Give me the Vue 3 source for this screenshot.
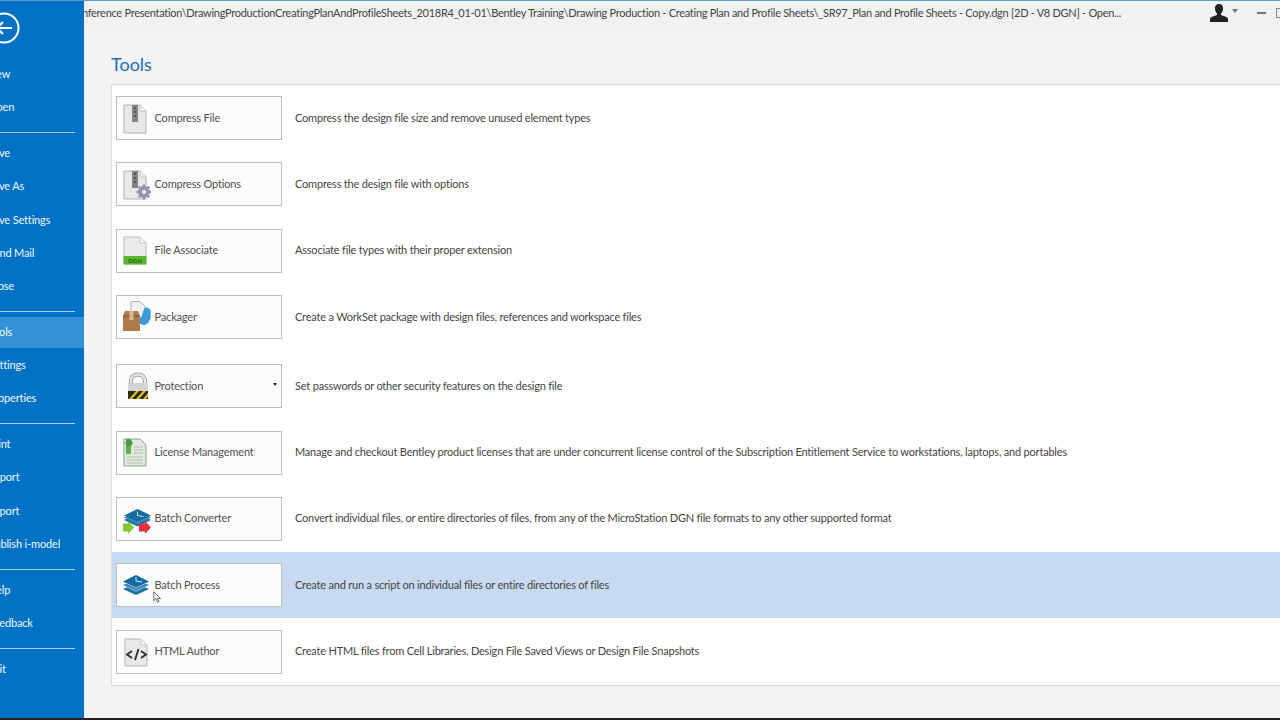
<script setup>
const navGroups = [
  ['New', 'Open'],
  ['Save', 'Save As', 'Save Settings', 'Send Mail', 'Close'],
  ['Tools', 'Settings', 'Properties'],
  ['Print', 'Import', 'Export', 'Publish i-model'],
  ['Help', 'Feedback'],
  ['Exit']
]

const tools = [
  { name: 'Compress File', icon: 'zip', desc: 'Compress the design file size and remove unused element types' },
  { name: 'Compress Options', icon: 'zipgear', desc: 'Compress the design file with options' },
  { name: 'File Associate', icon: 'dgn', desc: 'Associate file types with their proper extension' },
  { name: 'Packager', icon: 'package', desc: 'Create a WorkSet package with design files, references and workspace files' },
  { name: 'Protection', icon: 'lock', desc: 'Set passwords or other security features on the design file', menu: true },
  { name: 'License Management', icon: 'license', desc: 'Manage and checkout Bentley product licenses that are under concurrent license control of the Subscription Entitlement Service to workstations, laptops, and portables' },
  { name: 'Batch Converter', icon: 'convert', desc: 'Convert individual files, or entire directories of files, from any of the MicroStation DGN file formats to any other supported format' },
  { name: 'Batch Process', icon: 'layers', desc: 'Create and run a script on individual files or entire directories of files', active: true },
  { name: 'HTML Author', icon: 'html', desc: 'Create HTML files from Cell Libraries, Design File Saved Views or Design File Snapshots' }
]
</script>

<template>
  <div class="window">
    <aside class="sidebar">
      <svg class="back" width="40" height="40" viewBox="0 0 40 40" fill="none" stroke="#fff" stroke-width="2">
        <circle cx="4" cy="20" r="14.500" />
        <path d="M-3 20H12M3 14l-6 6 6 6" />
      </svg>
      <nav class="nav">
        <div v-for="(group, i) in navGroups" :key="i" class="nav-group">
          <a
            v-for="item in group"
            :key="item"
            class="nav-item"
            :class="{ selected: item === 'Tools' }"
          >{{ item }}</a>
        </div>
      </nav>
    </aside>

    <main class="content">
      <header class="titlebar">
        <span class="path">Conference Presentation\DrawingProductionCreatingPlanAndProfileSheets_2018R4_01-01\Bentley Training\Drawing Production - Creating Plan and Profile Sheets\_SR97_Plan and Profile Sheets - Copy.dgn [2D - V8 DGN] - Open...</span>
        <svg class="user" width="20" height="18" viewBox="0 0 20 18" fill="#222">
          <path d="M10 0c3 0 4.300 2.200 4 5-.2 2-1 3.600-2 4.600v1.400c2.500 1.200 6 1.600 7 3.400V18H1v-3.600c1-1.800 4.500-2.200 7-3.400V9.600C7 8.600 6.200 7 6 5c-.3-2.800 1-5 4-5z" />
        </svg>
        <span class="user-caret"></span>
        <span class="minimize"></span>
        <span class="maximize"></span>
      </header>

      <h1 class="heading">Tools</h1>

      <section class="panel">
        <div
          v-for="tool in tools"
          :key="tool.name"
          class="row"
          :class="{ active: tool.active }"
        >
          <button type="button" class="tool-btn">
            <svg class="icon" width="32" height="32" viewBox="0 0 32 32">
              <template v-if="tool.icon === 'zip' || tool.icon === 'zipgear'">
                <path d="M5 3h16l6 6v22H5z" fill="#e8e8e8" stroke="#b4b4b4" />
                <path d="M21 3v6h6z" fill="#fafafa" stroke="#c4c4c4" />
                <path d="M13 3h6v17h-6z" fill="#848484" />
                <path d="M15 5h2v2h-2zM15 9h2v2h-2zM15 13h2v2h-2z" fill="#555" />
              </template>
              <g v-if="tool.icon === 'zipgear'">
                <circle cx="25" cy="24" r="6" fill="#8e9aa8" />
                <path d="M25 16.500v15M17.500 24h15M19.700 18.700l10.600 10.600M30.300 18.700L19.700 29.300" stroke="#8e9aa8" stroke-width="2.500" />
                <circle cx="25" cy="24" r="2" fill="#eef0f2" />
              </g>
              <template v-if="tool.icon === 'dgn'">
                <path d="M5 2h16l6 6v21H5z" fill="#eaeaea" stroke="#bcbcbc" />
                <path d="M21 2v6h6z" fill="#fafafa" stroke="#c8c8c8" />
                <rect x="4.500" y="21" width="23" height="8.500" fill="#5cb531" />
                <text x="16" y="28" class="dgn-text">DGN</text>
              </template>
              <template v-if="tool.icon === 'package'">
                <path d="M12 .5h9l5 5V19H12z" fill="#eef1f5" stroke="#a7afb8" />
                <path d="M27 6.500c2.500 0 4.800 2 4.800 4.500 0 1.500-.5 2.500 0 4 .4 2-2.500 9-6.800 9-3 0-5.500-2-5-5 .3-1.800 2-2.500 3-4.500.9-2 1.500-8 4-8z" fill="#3d9ad9" />
                <path d="M4 15l2-5h13l2 5v15H4z" fill="#ad7a4c" />
                <path d="M4 15h17" stroke="#7f5531" />
                <path d="M10.500 10h4v9h-4z" fill="#dab78d" />
              </template>
              <template v-if="tool.icon === 'lock'">
                <path d="M12 15V10.500a7 6 0 0 1 14 0V15" fill="none" stroke="#8f8f8f" stroke-width="4" />
                <path d="M12 15V10.500a7 6 0 0 1 14 0V15" fill="none" stroke="#e8e8e8" stroke-width="2.400" />
                <rect x="9" y="13" width="20" height="16" fill="#d4d4d4" />
                <rect x="9" y="21" width="20" height="8" fill="#2b2a18" />
                <path d="M10 29l7-8h3l-7 8zM17 29l7-8h3l-7 8zM24 29l5-6v3.500L27 29z" fill="#d8c22d" />
              </template>
              <template v-if="tool.icon === 'license'">
                <path d="M5 2h16l6 6v21H5z" fill="#e2eadd" stroke="#8fa387" />
                <path d="M7 2h5v15H7z" fill="#62ad58" />
                <circle cx="10" cy="6" r="3.500" fill="#4a9c40" />
                <path d="M15 10h9M15 13h9M15 16h9M8 20h16M8 23h16M8 26h16" stroke="#afbfa8" />
              </template>
              <template v-if="tool.icon === 'convert'">
                <path d="M5 17l13.500 6.500L32 17l-4-2-9.500 4.500L9 15z" fill="#1f6f9f" />
                <path d="M5 14.500l13.500 6.500L32 14.500l-4-2-9.500 4.500L9 12.500z" fill="#3a8fc0" />
                <path d="M5 12.500L18.500 6 32 12.500 18.500 19z" fill="#156a9e" />
                <path d="M18.500 8.500v4l6 1" fill="none" stroke="#d3e6f2" />
                <path d="M4 20.500h5v-2.500l6 6.500-6 6.500v-2.500H4z" fill="#86c634" />
                <path d="M20 20.500h6v-2.500l6 6.500-6 6.500v-2.500h-6z" fill="#e0323f" />
              </template>
              <template v-if="tool.icon === 'layers'">
                <path d="M4 20l13-6 13 6-13 6z" fill="#1f6f9f" />
                <path d="M4 16.500l13-6 13 6-13 6z" fill="#d8e6f2" />
                <path d="M4 16l13-6 13 6-13 6z" fill="#3a8fc0" />
                <path d="M4 13l13-6 13 6-13 6z" fill="#d8e6f2" />
                <path d="M4 12.500l13-6.500 13 6.500-13 6z" fill="#156a9e" />
                <path d="M17 8v4l6 1" fill="none" stroke="#d3e6f2" />
              </template>
              <template v-if="tool.icon === 'html'">
                <path d="M6 3h16l6 6v21H6z" fill="#e8e8e8" stroke="#b5b5b5" />
                <path d="M22 3v6h6z" fill="#fafafa" stroke="#c4c4c4" />
                <path d="M13 15l-5 3.500 5 3.500M22 15l5 3.500-5 3.500M19.500 13l-3.500 11" fill="none" stroke="#2a2a2a" stroke-width="1.800" />
              </template>
            </svg>
            <span class="tool-name">{{ tool.name }}</span>
            <span v-if="tool.menu" class="caret"></span>
          </button>
          <span class="tool-desc">{{ tool.desc }}</span>
        </div>
      </section>
    </main>

    <svg class="cursor" width="9" height="12" viewBox="0 0 12 16">
      <path d="M1 1v12l3-3 2 5 2-1-2-4h4z" fill="#fff" stroke="#444" />
    </svg>
    <div class="bottom-edge"></div>
  </div>
</template>

<style scoped>
.window {
  position: relative;
  display: flex;
  width: 1280px;
  height: 720px;
  overflow: hidden;
  background: #f3f3f3;
  font-family: Lato, Roboto, sans-serif;
  border-top: 1px solid #5aa0c0;
  box-sizing: border-box;
}

.sidebar {
  flex: 0 0 84px;
  width: 84px;
  background: #0072c6;
  overflow: hidden;
  color: #fff;
}

.back {
  display: block;
  margin-top: 7px;
}

.nav {
  margin-top: 10px;
}

.nav-group {
  padding-bottom: 7.800px;
  margin-bottom: 4px;
  margin-right: 9px;
  border-bottom: 1px solid #a8d0ee;
}

.nav-group:last-child {
  border-bottom: none;
}

.nav-item {
  display: block;
  height: 33.200px;
  line-height: 29.200px;
  margin-right: -9px;
  margin-left: -12px;
  border: 1px solid transparent;
  border-width: 1px 0;
  background-clip: padding-box;
  box-sizing: border-box;
  font-size: 11px;
  letter-spacing: -0.15px;
  white-space: nowrap;
  color: #f2f8fc;
}

.nav-item.selected {
  background-color: #3392d8;
}

.content {
  flex: 1;
  min-width: 0;
  display: flex;
  flex-direction: column;
}

.titlebar {
  display: flex;
  align-items: center;
  flex: 0 0 24px;
  background: #f1f1f1;
  overflow: hidden;
}

.path {
  flex: 1;
  min-width: 0;
  margin-left: -15px;
  padding-bottom: 2px;
  white-space: nowrap;
  font-size: 11px;
  letter-spacing: -0.28px;
  color: #444;
}

.user {
  flex: none;
}

.user-caret {
  flex: none;
  margin: 0 19px 4px 3px;
  border: 3px solid transparent;
  border-top: 4px solid #777;
  border-bottom: none;
}

.minimize {
  flex: none;
  width: 9px;
  height: 2px;
  margin-right: 10px;
  background: #777;
}

.maximize {
  flex: none;
  width: 3px;
  height: 8px;
  border: 1px solid #888;
  border-right: none;
}

.heading {
  margin: 27px 0 8px 27px;
  font-size: 18px;
  line-height: 24px;
  font-weight: 400;
  color: #1a6fb0;
}

.panel {
  margin-left: 27px;
  border: 1px solid #dcdcdc;
  border-right: none;
  background: #fff;
  box-sizing: border-box;
}

.row {
  display: flex;
  align-items: center;
  height: 66.300px;
  padding-left: 4px;
}

.row:nth-child(5) {
  margin-top: 3px;
}

.row.active {
  background: #c6daf1;
}

.tool-btn {
  position: relative;
  display: flex;
  align-items: center;
  width: 166px;
  height: 44px;
  padding: 0 0 0 2px;
  border: 1px solid #bdbdbd;
  background: #fcfcfc;
  font: inherit;
  text-align: left;
  box-sizing: border-box;
}

.icon {
  flex: 0 0 32px;
}

.tool-name {
  margin-left: 3.500px;
  padding-bottom: 2px;
  font-size: 11px;
  letter-spacing: -0.17px;
  color: #505050;
  white-space: nowrap;
}

.caret {
  position: absolute;
  right: 4px;
  top: 18px;
  border: 2.500px solid transparent;
  border-top: 3px solid #222;
  border-bottom: none;
}

.tool-desc {
  margin-left: 13px;
  padding-bottom: 2px;
  font-size: 11px;
  letter-spacing: -0.2px;
  color: #444;
  white-space: nowrap;
}

.dgn-text {
  font-size: 6px;
  font-weight: 700;
  fill: #1f5a10;
  text-anchor: middle;
}

.cursor {
  position: absolute;
  left: 153px;
  top: 590px;
}

.bottom-edge {
  position: absolute;
  left: 0;
  right: 0;
  bottom: 0;
  height: 2px;
  background: #222;
}
</style>

<style>
body {
  margin: 0;
}
</style>
